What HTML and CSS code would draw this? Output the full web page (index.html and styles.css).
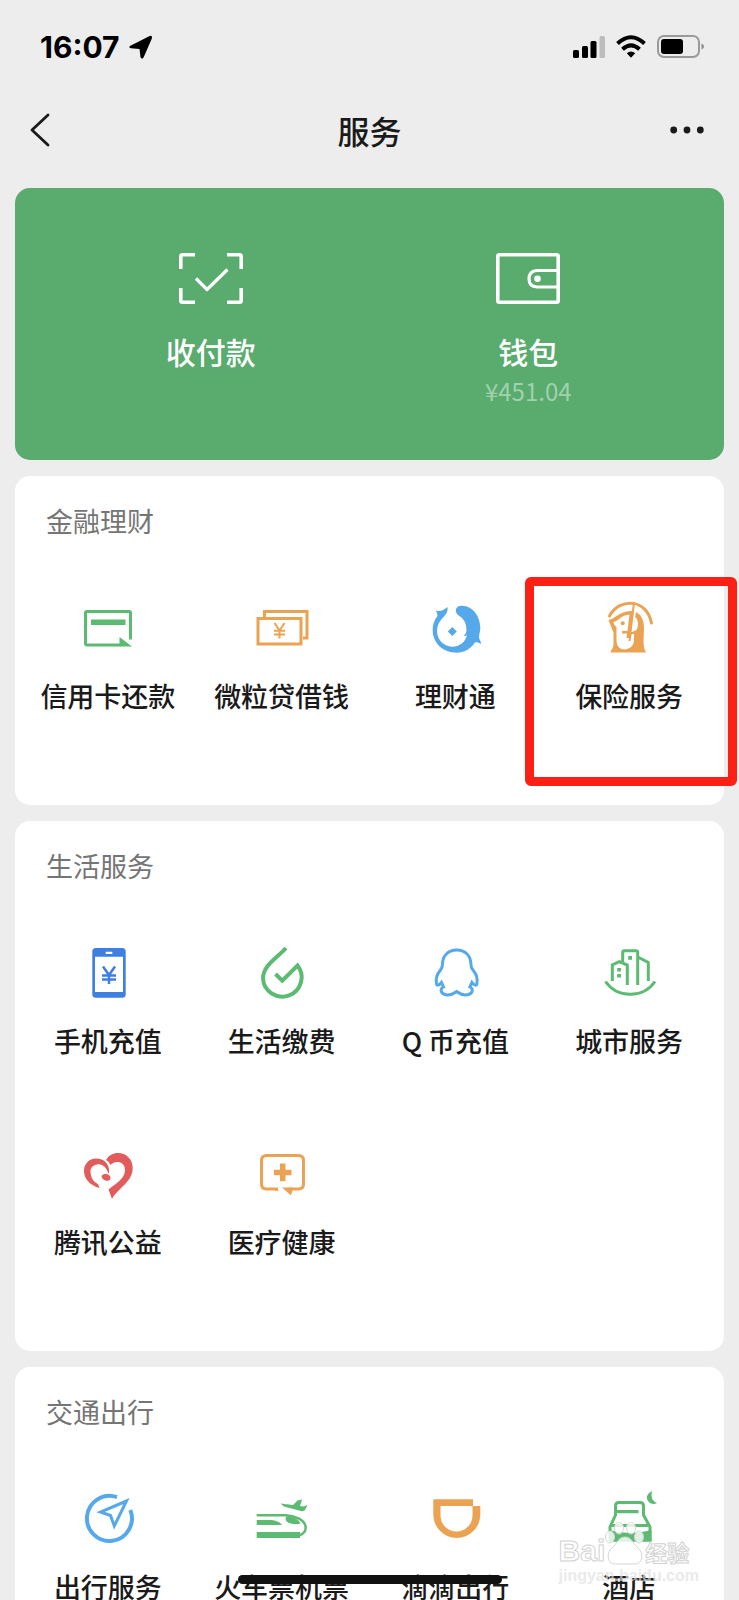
FILE: index.html
```html
<!DOCTYPE html>
<html lang="zh-CN">
<head>
<meta charset="utf-8">
<meta name="viewport" content="width=device-width, initial-scale=1">
<title>服务</title>
<link rel="stylesheet" href="styles.css">
</head>
<body>
<div class="screen">
  <div class="status">
    <div class="status-left">
      <span class="time">16:07</span>
      <svg class="locate" viewBox="0 0 26 26"><path d="M2.5 11.2L22 1.2Q25.6 0 24.8 3.600L16.300 23.200Q14.600 26 13 23.200L12 14.500L3 13.800Q0 12.800 2.500 11.200Z"/></svg>
    </div>
    <div class="status-right">
      <svg class="signal" viewBox="0 0 32 22"><rect y="14" width="6" height="8" rx="1.500"/><rect x="9" y="10" width="6" height="12" rx="1.500"/><rect x="17.500" y="5" width="6" height="17" rx="1.500"/><rect x="26.500" width="5.500" height="22" rx="1.500" fill="#bdbdbd"/></svg>
      <svg class="wifi" viewBox="0 0 30 24"><g fill="none" stroke="#000" stroke-width="4"><path d="M1.500 8.500Q15-4 28.500 8.500"/><path d="M6.500 14.300Q15 6.500 23.500 14.300"/></g><path d="M10.800 18.300Q15 14.800 19.200 18.300L15 22.800Z"/></svg>
      <svg class="battery" viewBox="0 0 47 24"><rect x="1" y="1" width="41" height="21" rx="6" fill="none" stroke="#9a9a9a" stroke-width="2"/><rect x="4" y="4" width="22" height="15" rx="3"/><path d="M44.500 8.500Q47 9.500 47 11.500T44.500 14.500Z" fill="#8a8a8a"/></svg>
    </div>
  </div>

  <header class="nav">
    <button class="nav-btn" type="button" aria-label="返回"><svg class="back" viewBox="0 0 20 34"><path d="M18 2L2 17L18 32" fill="none" stroke="#1a1a1a" stroke-width="2.800" stroke-linecap="round" stroke-linejoin="round"/></svg></button>
    <h1 class="title">服务</h1>
    <button class="nav-btn" type="button" aria-label="更多"><svg class="dots" viewBox="0 0 34 8"><circle cx="3.700" cy="4" r="3.400"/><circle cx="17" cy="4" r="3.400"/><circle cx="30.300" cy="4" r="3.400"/></svg></button>
  </header>

  <main class="content">
    <section class="pay">
      <a class="pay-item" href="#pay">
        <svg class="pay-icon" viewBox="0 0 64 51"><g fill="none" stroke="#fff" stroke-width="3.600"><path d="M16 1.800H3.500Q1.800 1.800 1.800 3.500V16M48 1.800H60.500Q62.200 1.800 62.200 3.500V16M16 49.200H3.500Q1.800 49.200 1.800 47.500V35M48 49.200H60.500Q62.200 49.200 62.200 47.500V35"/><path d="M17 25.500L28 36.500L48.500 16.500" stroke-width="3.200" stroke-linejoin="round"/></g></svg>
        <span class="pay-label">收付款</span>
      </a>
      <a class="pay-item" href="#wallet">
        <svg class="pay-icon" viewBox="0 0 64 51"><g fill="none" stroke="#fff" stroke-width="3.600"><rect x="1.800" y="1.800" width="60.400" height="47.400" rx="1.500"/><path d="M62 17.500H41Q33 18 33 25.800T41 34H62" stroke-width="3.200"/></g><circle cx="41.500" cy="25.700" r="3.300" fill="#fff"/></svg>
        <span class="pay-label">钱包</span>
        <span class="balance">¥451.04</span>
      </a>
    </section>

    <section class="card">
      <h2 class="heading">金融理财</h2>
      <div class="grid">
        <a class="tile green" href="#card"><svg class="icon" viewBox="0 0 56 56"><path class="line" d="M50.500 39.500V13Q50.500 11.500 49 11.500H7Q5.500 11.500 5.500 13V43.500Q5.500 45 7 45H41"/><path class="fill" d="M11 19.500H45.500V25H11ZM39.500 37L52 46.500H39.500Z"/></svg><span class="label">信用卡还款</span></a>
        <a class="tile orange" href="#loan"><svg class="icon" viewBox="0 0 56 56"><path class="line" d="M4 18.500H47V44H4ZM10.500 17V11.500H53V38H49"/><path class="thin" d="M20.500 23L25.500 30.500L30.500 23M25.500 30.500V38.500M20 30.700H31M20 34.500H31"/></svg><span class="label">微粒贷借钱</span></a>
        <a class="tile blue" href="#fund"><svg class="icon" viewBox="0 0 56 56"><path class="fill" d="M9 10.500C14 12 17 10 20.500 7C21.500 13 17 16 14 20C8 27 9 38 16 43.500C24 49.500 37 47 40 35C38.500 36.500 37.500 36 36.500 35.500C39 34 39 33 39.500 30C39.500 22 36 18 31 15C27 11 29 6 34 5.700C46 5 53 17 53.300 27C53.500 31 52 34 52 37.500C52.300 39.500 54 41 54 44C51.500 42.500 50 42 48 42.500C43 49.500 37 52.700 29.700 52.700C16 52.700 5.700 43 5.700 30C5.700 24 8 19 10.500 16C10.500 14 9.500 12 9 10.500ZM25.300 27L29.800 31.500L25.300 36L20.800 31.500Z"/></svg><span class="label">理财通</span></a>
        <a class="tile orange marked" href="#insurance"><svg class="icon" viewBox="0 0 56 56"><path class="line round" d="M8.500 16C19-3 46-1 50.500 23"/><path class="fill" d="M7.500 20C14 19 18 11.500 30 11C40 11.500 43 20 43 28L42.500 41C42.500 46 43 49 45 52.500H9.500C11 48 12.500 48 12.500 44V29H15.500V40Z"/><path class="blank" d="M12.500 22C18 21 20 15 28.500 14.500L26.500 31H21V33.500H26L25.500 38H30L30.500 34H33V40C33 46 28 49.500 23.500 49.500C18 49.500 15.500 45 15.500 40V27C14 26 12.500 24 12.500 22ZM34.500 17C37 20 38 24 36 29C35 31 33 31.500 31 31Z"/><circle class="fill" cx="21.700" cy="23.300" r="2"/><path class="blank" d="M33.500 5L30 32H32L36 5Z"/><path class="thin" d="M33 2L28.500 41"/></svg><span class="label">保险服务</span></a>
      </div>
    </section>

    <section class="card">
      <h2 class="heading">生活服务</h2>
      <div class="grid">
        <a class="tile royal" href="#topup"><svg class="icon" viewBox="0 0 56 56"><rect class="fill" x="12.300" y="3" width="33.400" height="49.700" rx="3.500"/><path class="blank" d="M15 11.700H43V47H15ZM25.700 6.800H32.300V9H25.700Z"/><path class="thin wide" d="M23 21.500L29 30L35 21.500M29 29V39M22 30.500H36M22 34.500H36"/></svg><span class="label">手机充值</span></a>
        <a class="tile green" href="#bills"><svg class="icon" viewBox="0 0 56 56"><path class="line bold" d="M32 3C24 12 9 20 9 33.500A19.300 19.300 0 1 0 43.500 20.500L28.300 35.700L21.500 29"/></svg><span class="label">生活缴费</span></a>
        <a class="tile blue" href="#qcoin"><svg class="icon" viewBox="0 0 56 56"><path class="line" d="M29.700 5C20 5 15.500 12 15.500 19C15.500 22 15 23 13.500 25C10 29 8.500 34 9.500 39C10 41.500 13 39.500 14.500 37.500L16.500 42C12 44 14 50 21 50C26 50 28 47.500 29.700 46.500C31.400 47.500 33.400 50 38.400 50C45.400 50 47.400 44 42.900 42L44.900 37.500C46.400 39.500 49.400 41.500 49.900 39C50.900 34 49.400 29 45.900 25C44.400 23 43.900 22 43.900 19C43.900 12 39.400 5 29.700 5Z"/></svg><span class="label">Q 币充值</span></a>
        <a class="tile green" href="#city"><svg class="icon" viewBox="0 0 56 56"><path class="line" d="M4.500 36.500Q13 49 29 49.300T54 36.500M11.300 36V20L18.300 16.700L26.300 20V40M21.700 17V7.500Q21.700 5.700 23.500 5.700H35Q36.700 5.700 36.700 7.500V40M36.700 12L47.300 17.500V36"/><path class="fill" d="M27.200 11H31V14.800H27.200ZM16.200 23H20V26.600H16.200ZM16.200 29H20V32.600H16.200Z"/></svg><span class="label">城市服务</span></a>
        <a class="tile red" href="#charity"><svg class="icon" viewBox="0 0 56 56"><path class="fill" d="M19.500 42C9 39 4 32 4 25C4 18 9 12.500 16 12.500C23 12.500 28 16.500 29 23C29.300 25.500 29 26.500 28.500 28C26.500 21 22 17.500 17 18.500C12 19.500 10 23 10.500 26.500C11 32 14 36.500 18 38ZM26 14C29 9 33 7 38 7C46 7 52.700 13 52.700 22C52.700 36 38 42 32 53L28.500 43.500C38 36 45 32 45 24C45 15 35 14 30.500 19Q29 15.500 26 14Z"/><path class="fill" d="M21.500 30C24 26.500 31 28 30.500 32.500C29.500 36.500 22 35 21.500 30Z"/></svg><span class="label">腾讯公益</span></a>
        <a class="tile orange" href="#health"><svg class="icon" viewBox="0 0 56 56"><path class="line" d="M24 43H12.500Q7.500 43 7.500 38V14.500Q7.500 9.500 12.500 9.500H44.500Q49.500 9.500 49.500 14.500V38Q49.500 43 44.500 43H35"/><path class="fill" d="M21 41.500L25 44.800H21ZM28 41.500H38.500V44.500L37 49.500ZM26 17.500H31.500V23.700H37.500V29.200H31.500V35.300H26V29.200H20V23.700H26Z"/></svg><span class="label">医疗健康</span></a>
      </div>
    </section>

    <section class="card">
      <h2 class="heading">交通出行</h2>
      <div class="grid">
        <a class="tile blue" href="#travel"><svg class="icon" viewBox="0 0 56 56"><path class="line bold" d="M37 6.200A22.500 22.500 0 1 0 50.300 19"/><path class="line" d="M46.500 10L20.500 21L30.500 24.500L34.300 35Z"/></svg><span class="label">出行服务</span></a>
        <a class="tile green" href="#tickets"><svg class="icon" viewBox="0 0 56 56"><path class="thin wide" d="M2.700 24.300H32C42 25 50 29 51.500 35C52.500 40 49 43.500 45 44.500"/><path class="fill" d="M2.700 41H46V47H2.700ZM2.700 29H14C22 29 26 31 28 34H2.700ZM32 25.500C40 25 45 29 46.500 32.500C42 34 32 33 31.500 28ZM26.500 12.500L39 14L43.500 9.500L48 8.500L46 15L49.500 15.500L53.500 14L51 19C49 20.500 47 20.500 45 19.500L30 15.500Z"/></svg><span class="label">火车票机票</span></a>
        <a class="tile orange" href="#taxi"><svg class="icon" viewBox="0 0 56 56"><path class="fill" fill-rule="evenodd" d="M7.500 8.300H46V15H53.300V23.500A23.500 23.500 0 0 1 6.300 23.500V9.500Q6.300 8.300 7.500 8.300ZM13.500 15V24.500A16 16 0 0 0 45.500 24.500V15Z"/></svg><span class="label">滴滴出行</span></a>
        <a class="tile green" href="#hotel"><svg class="icon" viewBox="0 0 56 56"><path class="line" d="M9 50V36L14.500 24V15Q14.500 11.500 18 11.500H39Q42.500 11.500 42.500 15V24L49 36V50"/><path class="fill" d="M16 19H37.500V22.300H16ZM11 33H47V36H11ZM8 39Q29 45 50.500 39V50.700H8ZM51 0Q45 3 46 8Q49 15 56 12Q49 10 51 0Z"/></svg><span class="label">酒店</span></a>
      </div>
    </section>
  </main>

  <div class="watermark" aria-hidden="true">
    <div class="brand"><span>Bai</span><svg class="paw" viewBox="0 0 40 44"><g fill="#fff" fill-opacity=".8" stroke="#d6d6d6"><ellipse cx="5" cy="15" rx="4.500" ry="6"/><ellipse cx="14" cy="6" rx="4.500" ry="6"/><ellipse cx="26" cy="6" rx="4.500" ry="6"/><ellipse cx="34" cy="15" rx="4.500" ry="6"/><path d="M20 15C13 15 12 22 7 26C1 31 2 42 10 42H30C38 42 39 31 33 26C28 22 27 15 20 15Z"/></g><text class="du" x="20" y="38" text-anchor="middle">du</text></svg><span class="cn">经验</span></div>
    <div class="site">jingyan.baidu.com</div>
  </div>
  <div class="home-bar"></div>
</div>
</body>
</html>
```
FILE: styles.css
```css
* {
  box-sizing: border-box;
}

body {
  margin: 0;
  background: #ededed;
  color: #1a1a1a;
  font-family: "Noto Sans CJK SC", "Noto Sans", sans-serif;
}

.screen {
  position: relative;
  display: flex;
  flex-direction: column;
  height: 100vh;
  overflow: hidden;
}

.status {
  display: flex;
  flex: none;
  align-items: center;
  justify-content: space-between;
  height: 94px;
  padding: 0 35px 0 40px;
}

.status-left,
.status-right {
  display: flex;
  align-items: center;
}

.status-left {
  gap: 8px;
}

.status-right {
  gap: 11px;
}

.time {
  color: #000;
  font: 700 30px/36px Inter, "Liberation Sans", sans-serif;
}

.locate {
  width: 25px;
  height: 25px;
}

.signal {
  width: 32px;
  height: 22px;
}

.wifi {
  width: 30px;
  height: 24px;
}

.battery {
  width: 47px;
  height: 24px;
}

.nav {
  display: flex;
  flex: none;
  align-items: center;
  justify-content: space-between;
  height: 72px;
  padding: 0 30px;
}

.nav-btn {
  display: flex;
  align-items: center;
  min-width: 40px;
  height: 44px;
  padding: 0;
  border: 0;
  background: none;
}

.nav-btn:last-child {
  justify-content: flex-end;
  padding-right: 5px;
}

.back {
  width: 20px;
  height: 34px;
}

.dots {
  width: 34px;
  height: 8px;
  fill: #1a1a1a;
}

.title {
  margin: 0;
  font-size: 32px;
  font-weight: 500;
  line-height: 44px;
}

.content {
  display: flex;
  flex: 1;
  flex-direction: column;
  gap: 16px;
  min-height: 0;
  padding: 22px 15px 0;
  overflow: hidden;
}

.pay {
  display: grid;
  flex: none;
  grid-template-columns: 1fr 1fr;
  min-height: 272px;
  padding: 65px 37px 0;
  border-radius: 15px;
  background: #59ab6e;
}

.pay-item {
  display: flex;
  flex-direction: column;
  align-items: center;
  color: #fff;
  text-decoration: none;
}

.pay-icon {
  width: 64px;
  height: 51px;
}

.pay-label {
  margin-top: 27px;
  font-size: 30px;
  font-weight: 500;
  line-height: 40px;
}

.balance {
  margin-top: 5px;
  color: #a0d2ad;
  font-size: 24px;
  line-height: 30px;
}

.card {
  flex: none;
  padding: 28px 8px 4px 6px;
  border-radius: 15px;
  background: #fff;
}

.heading {
  margin: 0 0 62px;
  padding-left: 25px;
  color: #757575;
  font-size: 27px;
  font-weight: 400;
  line-height: 34px;
}

.grid {
  display: grid;
  grid-template-columns: repeat(4, 1fr);
}

.tile {
  position: relative;
  display: flex;
  flex-direction: column;
  gap: 23px;
  align-items: center;
  padding-bottom: 88px;
  text-decoration: none;
}

.marked::after {
  position: absolute;
  inset: -23px -21px 15px -17px;
  border: 9px solid #fc2015;
  border-radius: 6px;
  content: "";
}

.icon {
  width: 56px;
  height: 56px;
}

.label {
  color: #1a1a1a;
  font-size: 27px;
  font-weight: 500;
  line-height: 34px;
  white-space: nowrap;
}

.green { color: #5cba73; }
.orange { color: #eba353; }
.blue { color: #55a9ea; }
.royal { color: #3f7fdf; }
.red { color: #e25c5c; }

.fill {
  fill: currentColor;
}

.blank {
  fill: #fff;
}

.line,
.thin {
  fill: none;
  stroke: currentColor;
  stroke-width: 3;
}

.line.bold {
  stroke-width: 4;
}

.line.round {
  stroke-linecap: round;
}

.thin {
  stroke-width: 2;
}

.thin.wide {
  stroke-width: 2.5;
}

.watermark {
  position: absolute;
  right: 40px;
  bottom: 14px;
  color: rgba(255, 255, 255, 0.8);
  -webkit-text-stroke: 1px #d2d2d2;
  font-family: "Liberation Sans", sans-serif;
  font-weight: 700;
}

.brand {
  display: flex;
  align-items: flex-end;
  font-size: 30px;
  line-height: 30px;
}

.brand .cn {
  font-family: "Noto Sans CJK SC", sans-serif;
  font-size: 22px;
}

.paw {
  width: 40px;
  height: 44px;
}

.du {
  fill: #fff;
  font-size: 18px;
}

.site {
  color: rgba(225, 225, 225, 0.7);
  font-size: 16px;
  line-height: 20px;
  -webkit-text-stroke: 0;
}

.home-bar {
  position: absolute;
  bottom: 16px;
  left: 50%;
  width: 264px;
  height: 9px;
  border-radius: 5px;
  background: #111;
  transform: translateX(-50%);
}
```
